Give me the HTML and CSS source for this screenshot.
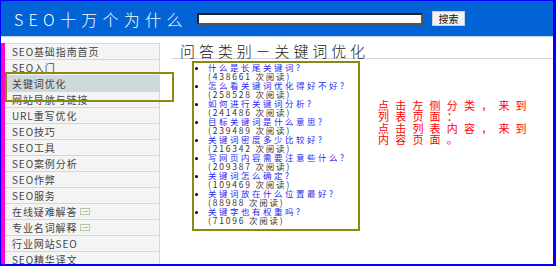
FILE: index.html
```html
<!DOCTYPE html>
<html lang="zh-CN">
<head>
<meta charset="utf-8">
<title>SEO十万个为什么</title>
<link rel="stylesheet" href="styles.css">
</head>
<body>
<div class="frame">
  <header class="top">
    <div class="brand">SEO十万个为什么</div>
    <input class="search" type="text">
    <button class="btn">搜索</button>
  </header>
  <div class="body">
    <div class="stripe"></div>
    <nav class="side">
      <ul class="menu">
        <li>SEO基础指南首页</li>
        <li>SEO入门</li>
        <li class="active">关键词优化</li>
        <li>网站导航与链接</li>
        <li>URL重写优化</li>
        <li>SEO技巧</li>
        <li>SEO工具</li>
        <li>SEO案例分析</li>
        <li>SEO作弊</li>
        <li>SEO服务</li>
        <li>在线疑难解答 <svg class="fold" width="10" height="7" viewBox="0 0 10 7"><rect x="0.5" y="0.5" width="9" height="6" fill="#f4f7f2" stroke="#b8c8b0"/><line x1="2" y1="3.5" x2="8" y2="3.5" stroke="#b8c8b0"/></svg></li>
        <li>专业名词解释 <svg class="fold" width="10" height="7" viewBox="0 0 10 7"><rect x="0.5" y="0.5" width="9" height="6" fill="#f4f7f2" stroke="#b8c8b0"/><line x1="2" y1="3.5" x2="8" y2="3.5" stroke="#b8c8b0"/></svg></li>
        <li>行业网站SEO</li>
        <li>SEO精华译文</li>
      </ul>
    </nav>
    <main class="main">
      <h1 class="title">问答类别－关键词优化</h1>
      <div class="row">
        <ul class="qa">
          <li><a href="#">什么是长尾关键词?</a><br><span class="cnt">(438661 次阅读)</span></li>
          <li><a href="#">怎么看关键词优化得好不好?</a><br><span class="cnt">(258528 次阅读)</span></li>
          <li><a href="#">如何进行关键词分析?</a><br><span class="cnt">(241486 次阅读)</span></li>
          <li><a href="#">目标关键词是什么意思?</a><br><span class="cnt">(239489 次阅读)</span></li>
          <li><a href="#">关键词密度多少比较好?</a><br><span class="cnt">(216342 次阅读)</span></li>
          <li><a href="#">写网页内容需要注意些什么?</a><br><span class="cnt">(209387 次阅读)</span></li>
          <li><a href="#">关键词怎么确定?</a><br><span class="cnt">(109469 次阅读)</span></li>
          <li><a href="#">关键词放在什么位置最好?</a><br><span class="cnt">(88988 次阅读)</span></li>
          <li><a href="#">关键字也有权重吗?</a><br><span class="cnt">(71096 次阅读)</span></li>
        </ul>
        <p class="note">点击左侧分类，来到<br>列表页面：<br>点击列表内容，来到<br>内容页面。</p>
      </div>
    </main>
  </div>
  <div class="mark"></div>
</div>
</body>
</html>
```
FILE: styles.css
```css
* { box-sizing: border-box; }
html, body { margin: 0; padding: 0; background: #fff; }
body { font-family: "Noto Sans CJK SC", "Noto Sans", sans-serif; }

.frame {
  position: relative;
  width: 556px;
  height: 266px;
  overflow: hidden;
  border-style: solid;
  border-color: #0000ff;
  border-width: 1px 3px 2px 1px;
  background: #fff;
}

.top {
  height: 36px;
  background: #0263d6;
  border-bottom: 1px solid #bcd6f2;
  display: flex;
  align-items: center;
  padding-left: 13px;
}
.brand {
  color: #fff;
  font-size: 16px;
  letter-spacing: 5.3px;
  line-height: 16px;
  width: 183px;
  font-weight: 300;
  font-family: "Noto Sans CJK SC", sans-serif;
}
.search {
  width: 226px;
  height: 12px;
  border: 2px solid #222;
  border-right-color: #555;
  border-bottom-color: #555;
  background: #fff;
  padding: 0;
  margin: 1px 0 0 0;
}
.btn {
  margin-left: 9px;
  width: 33px;
  height: 15px;
  padding: 0;
  font-size: 10px;
  line-height: 13px;
  background: #f2f2f2;
  border: 1px solid #c8d0dc;
  color: #111;
  font-family: "Noto Sans CJK SC", sans-serif;
}

.body {
  display: flex;
  padding-top: 6px;
  height: 227px;
}
.stripe {
  width: 4px;
  background: #ff00cc;
  flex: none;
}
.side {
  width: 155px;
  flex: none;
  border-right: 1px solid #d6d6d6;
  background: #f4f4f4;
}
.menu {
  list-style: none;
  margin: 0;
  padding: 0;
  border-top: 1px solid #d8d8d8;
}
.menu li {
  height: 16px;
  line-height: 15px;
  border-bottom: 1px solid #d6d6d6;
  padding-left: 7px;
  font-size: 10px;
  letter-spacing: 0.9px;
  color: #444;
  display: flex;
  align-items: center;
  gap: 2px;
}
.menu li.active { background: #cfd9dc; }
.fold { flex: none; margin-left: 1px; }

.main {
  flex: 1;
  padding-left: 12px;
}
.title {
  margin: 0;
  font-weight: 300;
  font-size: 15px;
  line-height: 15px;
  height: 16px;
  letter-spacing: 3.9px;
  color: #222;
  padding-left: 8px;
  border-bottom: 1px solid #d4d4d4;
}
.row {
  display: flex;
  align-items: flex-start;
  margin-top: 2px;
}
.qa {
  margin: 0 0 0 20px;
  width: 168px;
  height: 170px;
  border: 2px solid #8a8a12;
  padding: 0 0 0 14px;
  list-style: disc;
  font-size: 8.5px;
  line-height: 9px;
}
.qa li { color: #000; }
.qa a {
  color: #2a2af0;
  text-decoration: none;
  letter-spacing: 2.5px;
}
.cnt { color: #333; letter-spacing: 1.8px; }

.note {
  margin: 39px 0 0 18px;
  color: #ff0000;
  font-size: 11px;
  line-height: 11.3px;
  letter-spacing: 6.2px;
}

.mark {
  position: absolute;
  left: 4px;
  top: 71px;
  width: 169px;
  height: 30px;
  border: 2px solid #8a8a12;
}
```
